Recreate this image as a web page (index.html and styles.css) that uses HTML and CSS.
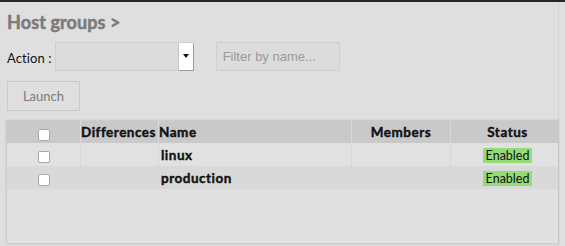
FILE: index.html
```html
<!DOCTYPE html>
<html>
<head>
<meta charset="utf-8">
<link rel="stylesheet" href="styles.css">
</head>
<body>
<div class="page">
  <h1 class="title">Host groups &gt;</h1>
  <div class="toolbar">
    <label class="action-label">Action :</label>
    <div class="select"><span class="select-arrow"><svg width="6" height="4" viewBox="0 0 6 4"><path d="M0 0H6L3 4Z" fill="#111"/></svg></span></div>
    <input class="filter" type="text" placeholder="Filter by name...">
  </div>
  <button class="launch">Launch</button>
  <div class="table-wrap">
    <table class="grid">
      <thead>
        <tr>
          <th class="c-check"><span class="cb"></span></th>
          <th class="c-diff">Differences</th>
          <th class="c-name">Name</th>
          <th class="c-members">Members</th>
          <th class="c-status">Status</th>
        </tr>
      </thead>
      <tbody>
        <tr class="odd">
          <td class="c-check"><span class="cb"></span></td>
          <td class="c-diff"></td>
          <td class="c-name">linux</td>
          <td class="c-members"></td>
          <td class="c-status"><span class="badge">Enabled</span></td>
        </tr>
        <tr class="even">
          <td class="c-check"><span class="cb"></span></td>
          <td class="c-diff"></td>
          <td class="c-name">production</td>
          <td class="c-members"></td>
          <td class="c-status"><span class="badge">Enabled</span></td>
        </tr>
      </tbody>
    </table>
  </div>
</div>
</body>
</html>
```
FILE: styles.css
```css
html, body {
  margin: 0;
  padding: 0;
  background: #dfdfdf;
}
body {
  border-top: 2px solid #262626;
  font-family: Lato, "Liberation Sans", sans-serif;
  width: 565px;
  height: 244px;
  overflow: hidden;
}
.page {
  box-sizing: border-box;
  width: 559px;
  height: 244px;
  border-right: 1px solid #d3d3d3;
  padding: 0 0 0 7px;
}
.title {
  margin: 0;
  padding-top: 9px;
  font-size: 18px;
  line-height: 22px;
  font-weight: 700;
  color: #7b7b7b;
  letter-spacing: 0.1px;
  -webkit-text-stroke: 0.5px #7b7b7b;
}
.toolbar {
  display: flex;
  align-items: center;
  margin-top: 8px;
  height: 30px;
}
.action-label {
  font-size: 13px;
  color: #111;
  margin-right: 3px;
  margin-top: 4px;
  letter-spacing: 0.1px;
}
.select {
  box-sizing: border-box;
  width: 139px;
  height: 29px;
  border: 1px solid #cfcfcf;
  background: #dcdcdc;
  display: flex;
  justify-content: flex-end;
}
.select-arrow {
  width: 14px;
  height: 27px;
  background: #fff;
  border-left: 1px solid #c8c8c8;
  box-shadow: 1px 1px 0 #999;
  display: flex;
  align-items: center;
  justify-content: center;
}
.filter {
  box-sizing: border-box;
  margin-left: 22px;
  width: 124px;
  height: 29px;
  border: 1px solid #cfcfcf;
  background: #dcdcdc;
  font-family: "Liberation Sans", Arial, sans-serif;
  font-size: 13px;
  padding: 0 0 0 6px;
  outline: none;
}
.filter::placeholder {
  color: #9a9a9a;
}
.launch {
  display: block;
  box-sizing: border-box;
  margin-top: 10px;
  width: 73px;
  height: 30px;
  border: 1px solid #cbcbcb;
  background: #dfdfdf;
  color: #7a7a7a;
  font-family: Lato, "Liberation Sans", sans-serif;
  font-size: 13px;
  padding: 0;
}
.table-wrap {
  box-sizing: border-box;
  margin-top: 10px;
  width: 551px;
  height: 122px;
  background: #e0e0e0;
  box-shadow: 0 0 2px 1px #c4c4c4;
}
.grid {
  width: 100%;
  border-collapse: collapse;
  font-size: 13.5px;
}
.grid th {
  background: #c9c9c9;
  height: 22px;
  padding: 0;
  font-weight: 700;
  color: #111;
  border-left: 1px solid #dadada;
  text-align: left;
  letter-spacing: 0.5px;
  -webkit-text-stroke: 0.4px #111;
}
.grid th:first-child { border-left: none; }
.grid td {
  height: 23px;
  padding: 0;
  color: #111;
  font-weight: 700;
  border-left: 1px solid #d8d8d8;
  letter-spacing: 0.5px;
  -webkit-text-stroke: 0.4px #111;
}
.grid td:first-child { border-left: none; }
.grid tr.odd td { background: #e1e1e1; }
.grid tr.even td { background: #d9d9d9; }
.c-check { width: 73px; text-align: center !important; }
.c-diff { width: 77px; }
.c-name { width: 190px; }
.grid td.c-name { padding-left: 2px; }
.c-members { width: 98px; text-align: center !important; }
.c-status { text-align: center !important; }
.grid .c-status { padding-left: 6px; }
.cb {
  display: inline-block;
  width: 10px;
  height: 10px;
  background: #fff;
  border: 1px solid #aaa;
  border-radius: 2px;
  vertical-align: middle;
  margin-top: 3px;
}
.grid .badge {
  display: inline-block;
  background: #94dc74;
  color: #111;
  font-weight: 400;
  font-size: 12.5px;
  line-height: 15px;
  padding: 0 3px;
  letter-spacing: 0;
  -webkit-text-stroke: 0;
}
```
